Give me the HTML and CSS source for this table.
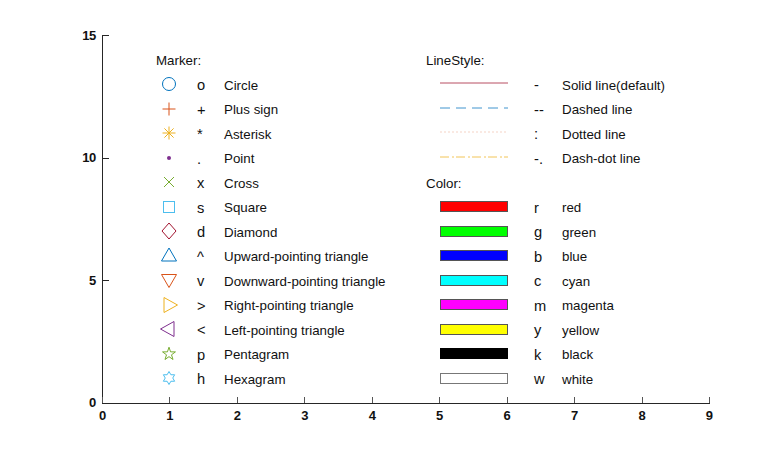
FILE: index.html
```html
<!DOCTYPE html>
<html>
<head>
<meta charset="utf-8">
<link rel="stylesheet" href="styles.css">
</head>
<body>
<div class="figure">
  <div class="plot-row">
    <div class="ylabels"><span>15</span><span>10</span><span>5</span><span>0</span></div>
    <div class="axes">
      <div class="xticks"><i></i><i></i><i></i><i></i><i></i><i></i><i></i><i></i><i></i><i></i></div>
      <div class="yticks"><i></i><i></i><i></i><i></i></div>

      <div class="legend markers">
        <div class="head">Marker:</div>

        <div class="mk"><svg viewBox="-9 -9 18 18" width="18" height="18"><circle r="6.5" fill="none" stroke="#0072BD"/></svg></div>
        <div class="code">o</div><div class="name">Circle</div>

        <div class="mk"><svg viewBox="-9 -9 18 18" width="18" height="18"><path d="M-6.5 0H6.5M0 -6.5V6.5" stroke="#D95319" fill="none"/></svg></div>
        <div class="code">+</div><div class="name">Plus sign</div>

        <div class="mk"><svg viewBox="-9 -9 18 18" width="18" height="18"><path d="M-6.5 0H6.5M0 -6.5V6.5M-4.6 -4.6L4.6 4.6M-4.6 4.6L4.6 -4.6" stroke="#EDB120" fill="none"/></svg></div>
        <div class="code">*</div><div class="name">Asterisk</div>

        <div class="mk"><svg viewBox="-9 -9 18 18" width="18" height="18"><circle r="2" fill="#7E2F8E"/></svg></div>
        <div class="code">.</div><div class="name">Point</div>

        <div class="mk"><svg viewBox="-9 -9 18 18" width="18" height="18"><path d="M-5 -5L5 5M-5 5L5 -5" stroke="#77AC30" fill="none"/></svg></div>
        <div class="code">x</div><div class="name">Cross</div>

        <div class="mk"><svg viewBox="-9 -9 18 18" width="18" height="18"><rect x="-5.5" y="-5.5" width="11" height="11" stroke="#4DBEEE" fill="none"/></svg></div>
        <div class="code">s</div><div class="name">Square</div>

        <div class="mk"><svg viewBox="-9 -9 18 18" width="18" height="18"><path d="M0 -8L7 0L0 8L-7 0Z" stroke="#A2142F" fill="none"/></svg></div>
        <div class="code">d</div><div class="name">Diamond</div>

        <div class="mk"><svg viewBox="-9 -9 18 18" width="18" height="18"><path d="M0 -8L7.5 5L-7.5 5Z" stroke="#0072BD" fill="none"/></svg></div>
        <div class="code">^</div><div class="name">Upward-pointing triangle</div>

        <div class="mk"><svg viewBox="-9 -9 18 18" width="18" height="18"><path d="M0 7.5L7.5 -5.5L-7.5 -5.5Z" stroke="#D95319" fill="none"/></svg></div>
        <div class="code">v</div><div class="name">Downward-pointing triangle</div>

        <div class="mk"><svg viewBox="-9 -9 18 18" width="18" height="18"><path d="M8.5 0L-5 -7.5L-5 7.5Z" stroke="#EDB120" fill="none"/></svg></div>
        <div class="code">&gt;</div><div class="name">Right-pointing triangle</div>

        <div class="mk"><svg viewBox="-9 -9 18 18" width="18" height="18"><path d="M-8.5 0L5 -7.5L5 7.5Z" stroke="#7E2F8E" fill="none"/></svg></div>
        <div class="code">&lt;</div><div class="name">Left-pointing triangle</div>

        <div class="mk"><svg viewBox="-9 -9 18 18" width="18" height="18"><path d="M0 -6.8L1.55 -2.15L6.45 -2.1L2.5 0.8L4 5.5L0 2.65L-4 5.5L-2.5 0.8L-6.45 -2.1L-1.55 -2.15Z" stroke="#77AC30" fill="none" stroke-linejoin="miter"/></svg></div>
        <div class="code">p</div><div class="name">Pentagram</div>

        <div class="mk"><svg viewBox="-9 -9 18 18" width="18" height="18"><path d="M0 -6.5L1.88 -3.25L5.63 -3.25L3.75 0L5.63 3.25L1.88 3.25L0 6.5L-1.88 3.25L-5.63 3.25L-3.75 0L-5.63 -3.25L-1.88 -3.25Z" stroke="#4DBEEE" fill="none"/></svg></div>
        <div class="code">h</div><div class="name">Hexagram</div>
      </div>

      <div class="legend styles">
        <div class="head">LineStyle:</div>

        <div class="ln"><svg width="68" height="4" viewBox="0 0 68 4"><line x1="0" y1="2" x2="68" y2="2" stroke="#A2142F" stroke-opacity="0.75"/></svg></div>
        <div class="code">-</div><div class="name">Solid line(default)</div>

        <div class="ln"><svg width="68" height="4" viewBox="0 0 68 4"><line x1="0" y1="2" x2="68" y2="2" stroke="#0072BD" stroke-opacity="0.75" stroke-dasharray="10 6"/></svg></div>
        <div class="code">--</div><div class="name">Dashed line</div>

        <div class="ln"><svg width="68" height="4" viewBox="0 0 68 4"><line x1="0" y1="2" x2="67" y2="2" stroke="#D95319" stroke-opacity="0.25" stroke-dasharray="2 2"/></svg></div>
        <div class="code">:</div><div class="name">Dotted line</div>

        <div class="ln"><svg width="68" height="4" viewBox="0 0 68 4"><line x1="0" y1="2" x2="68" y2="2" stroke="#EDB120" stroke-opacity="0.75" stroke-dasharray="9 3 2 2"/></svg></div>
        <div class="code">-.</div><div class="name">Dash-dot line</div>

        <div class="head">Color:</div>

        <div class="ln"><div class="swatch sw-r"></div></div><div class="code">r</div><div class="name">red</div>
        <div class="ln"><div class="swatch sw-g"></div></div><div class="code">g</div><div class="name">green</div>
        <div class="ln"><div class="swatch sw-b"></div></div><div class="code">b</div><div class="name">blue</div>
        <div class="ln"><div class="swatch sw-c"></div></div><div class="code">c</div><div class="name">cyan</div>
        <div class="ln"><div class="swatch sw-m"></div></div><div class="code">m</div><div class="name">magenta</div>
        <div class="ln"><div class="swatch sw-y"></div></div><div class="code">y</div><div class="name">yellow</div>
        <div class="ln"><div class="swatch sw-k"></div></div><div class="code">k</div><div class="name">black</div>
        <div class="ln"><div class="swatch sw-w"></div></div><div class="code">w</div><div class="name">white</div>
      </div>
    </div>
  </div>
  <div class="xlabels"><span>0</span><span>1</span><span>2</span><span>3</span><span>4</span><span>5</span><span>6</span><span>7</span><span>8</span><span>9</span></div>
</div>
</body>
</html>
```

FILE: styles.css
```css
html, body {
  margin: 0;
  padding: 0;
  background: #ffffff;
}

body {
  width: 784px;
  height: 453px;
  overflow: hidden;
  font-family: "Liberation Sans", Arial, sans-serif;
  color: #111111;
}

.figure {
  padding-top: 35px;
}

.plot-row {
  display: flex;
  align-items: flex-start;
}

.ylabels {
  box-sizing: border-box;
  width: 102px;
  height: 383px;
  margin-top: -7.5px;
  margin-bottom: -6.5px;
  padding-right: 6px;
  display: flex;
  flex-direction: column;
  justify-content: space-between;
  align-items: flex-end;
  font-weight: bold;
  font-size: 13px;
  line-height: 15px;
  color: #111;
  letter-spacing: -0.3px;
}

.axes {
  position: relative;
  box-sizing: border-box;
  width: 608px;
  height: 369px;
  border-left: 1px solid #262626;
  border-bottom: 1px solid #262626;
  padding: 12.3px 0 0 53px;
  display: flex;
}

.xticks {
  position: absolute;
  left: -1px;
  right: 0;
  bottom: 0;
  height: 6px;
  display: flex;
  justify-content: space-between;
}

.xticks i {
  display: block;
  width: 1px;
  height: 6px;
  background: #555;
}

.yticks {
  position: absolute;
  left: 0;
  top: 0;
  bottom: -1px;
  width: 6px;
  display: flex;
  flex-direction: column;
  justify-content: space-between;
}

.yticks i {
  display: block;
  width: 6px;
  height: 1px;
  background: #262626;
}

.legend {
  display: grid;
  grid-auto-rows: 24.533px;
  align-items: center;
  font-size: 13.33px;
  white-space: nowrap;
}

.markers {
  width: 270px;
  grid-template-columns: 26px 41px auto;
}

.styles {
  grid-template-columns: 82px 53px auto;
}

.head {
  grid-column: 1 / -1;
  padding-top: 2px;
}

.mk {
  display: flex;
  justify-content: center;
  align-items: center;
}

.mk svg {
  display: block;
}

.markers .code {
  padding-left: 15px;
}

.styles .code {
  padding-left: 26px;
}

.code {
  font-size: 14.67px;
  padding-top: 2px;
}

.name {
  padding-top: 2px;
  padding-left: 1px;
}

.ln {
  padding-left: 14px;
  display: flex;
  align-items: center;
}

.ln svg {
  display: block;
  margin-top: -2px;
}

.swatch {
  box-sizing: border-box;
  width: 68px;
  height: 11px;
  border: 1px solid #555;
}

.sw-r { background: #ff0000; }
.sw-g { background: #00ff00; }
.sw-b { background: #0000ff; }
.sw-c { background: #00ffff; }
.sw-m { background: #ff00ff; }
.sw-y { background: #ffff00; }
.sw-k { background: #000000; border-color: #000; }
.sw-w { background: #ffffff; border-color: #777; }

.xlabels {
  margin-left: 102px;
  width: 608px;
  margin-top: 4px;
  display: flex;
  justify-content: space-between;
  font-weight: bold;
  font-size: 13px;
  line-height: 15px;
  color: #111;
}

.xlabels span {
  width: 1px;
  display: flex;
  justify-content: center;
}
```
